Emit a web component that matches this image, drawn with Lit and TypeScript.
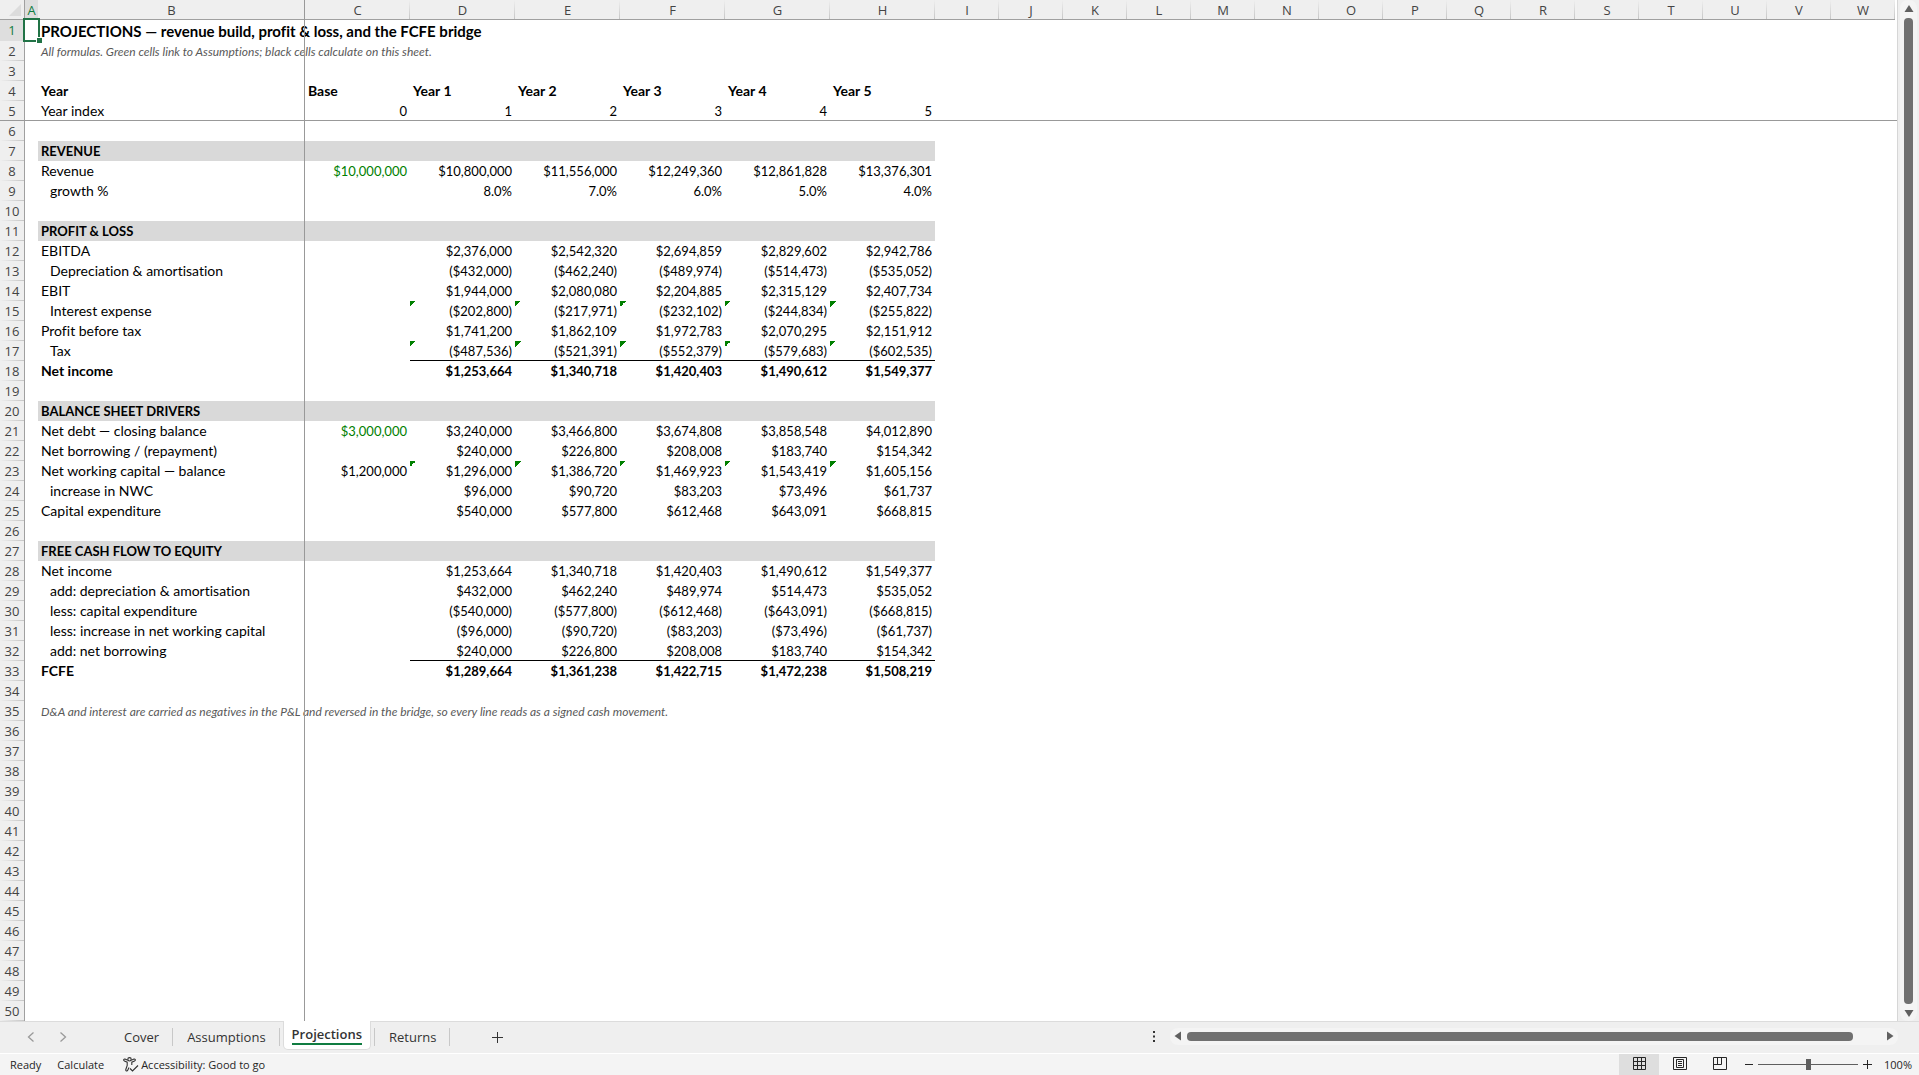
import { LitElement, html, css, svg } from "lit";
import { customElement, state } from "lit/decorators.js";
import { classMap } from "lit/directives/class-map.js";

type Kind = "title" | "note" | "years" | "index" | "section" | "line" | "total";

interface Row {
  kind: Kind;
  label: string;
  indent?: boolean;
  linked?: boolean;
  flagged?: boolean;
  ruled?: boolean;
  cells?: string[];
}

const COLUMNS = "ABCDEFGHIJKLMNOPQRSTUVW".split("");
const ROW_COUNT = 50;

const ROWS: Record<number, Row> = {
  1: { kind: "title", label: "PROJECTIONS — revenue build, profit & loss, and the FCFE bridge" },
  2: { kind: "note", label: "All formulas. Green cells link to Assumptions; black cells calculate on this sheet." },
  4: { kind: "years", label: "Year", cells: ["Base", "Year 1", "Year 2", "Year 3", "Year 4", "Year 5"] },
  5: { kind: "index", label: "Year index", cells: ["0", "1", "2", "3", "4", "5"] },
  7: { kind: "section", label: "REVENUE" },
  8: { kind: "line", label: "Revenue", linked: true, cells: ["$10,000,000", "$10,800,000", "$11,556,000", "$12,249,360", "$12,861,828", "$13,376,301"] },
  9: { kind: "line", label: "growth %", indent: true, cells: ["", "8.0%", "7.0%", "6.0%", "5.0%", "4.0%"] },
  11: { kind: "section", label: "PROFIT & LOSS" },
  12: { kind: "line", label: "EBITDA", cells: ["", "$2,376,000", "$2,542,320", "$2,694,859", "$2,829,602", "$2,942,786"] },
  13: { kind: "line", label: "Depreciation & amortisation", indent: true, cells: ["", "($432,000)", "($462,240)", "($489,974)", "($514,473)", "($535,052)"] },
  14: { kind: "line", label: "EBIT", cells: ["", "$1,944,000", "$2,080,080", "$2,204,885", "$2,315,129", "$2,407,734"] },
  15: { kind: "line", label: "Interest expense", indent: true, flagged: true, cells: ["", "($202,800)", "($217,971)", "($232,102)", "($244,834)", "($255,822)"] },
  16: { kind: "line", label: "Profit before tax", cells: ["", "$1,741,200", "$1,862,109", "$1,972,783", "$2,070,295", "$2,151,912"] },
  17: { kind: "line", label: "Tax", indent: true, flagged: true, ruled: true, cells: ["", "($487,536)", "($521,391)", "($552,379)", "($579,683)", "($602,535)"] },
  18: { kind: "total", label: "Net income", cells: ["", "$1,253,664", "$1,340,718", "$1,420,403", "$1,490,612", "$1,549,377"] },
  20: { kind: "section", label: "BALANCE SHEET DRIVERS" },
  21: { kind: "line", label: "Net debt — closing balance", linked: true, cells: ["$3,000,000", "$3,240,000", "$3,466,800", "$3,674,808", "$3,858,548", "$4,012,890"] },
  22: { kind: "line", label: "Net borrowing / (repayment)", cells: ["", "$240,000", "$226,800", "$208,008", "$183,740", "$154,342"] },
  23: { kind: "line", label: "Net working capital — balance", flagged: true, cells: ["$1,200,000", "$1,296,000", "$1,386,720", "$1,469,923", "$1,543,419", "$1,605,156"] },
  24: { kind: "line", label: "increase in NWC", indent: true, cells: ["", "$96,000", "$90,720", "$83,203", "$73,496", "$61,737"] },
  25: { kind: "line", label: "Capital expenditure", cells: ["", "$540,000", "$577,800", "$612,468", "$643,091", "$668,815"] },
  27: { kind: "section", label: "FREE CASH FLOW TO EQUITY" },
  28: { kind: "line", label: "Net income", cells: ["", "$1,253,664", "$1,340,718", "$1,420,403", "$1,490,612", "$1,549,377"] },
  29: { kind: "line", label: "add: depreciation & amortisation", indent: true, cells: ["", "$432,000", "$462,240", "$489,974", "$514,473", "$535,052"] },
  30: { kind: "line", label: "less: capital expenditure", indent: true, cells: ["", "($540,000)", "($577,800)", "($612,468)", "($643,091)", "($668,815)"] },
  31: { kind: "line", label: "less: increase in net working capital", indent: true, cells: ["", "($96,000)", "($90,720)", "($83,203)", "($73,496)", "($61,737)"] },
  32: { kind: "line", label: "add: net borrowing", indent: true, ruled: true, cells: ["", "$240,000", "$226,800", "$208,008", "$183,740", "$154,342"] },
  33: { kind: "total", label: "FCFE", cells: ["", "$1,289,664", "$1,361,238", "$1,422,715", "$1,472,238", "$1,508,219"] },
  35: { kind: "note", label: "D&A and interest are carried as negatives in the P&L and reversed in the bridge, so every line reads as a signed cash movement." },
};

@customElement("sheet-grid")
class SheetGrid extends LitElement {
  static styles = css`
    :host {
      display: block;
      overflow: hidden;
      background: #fff;
      border-right: 1px solid #d6d6d6;
      font-family: Lato, "Liberation Sans", sans-serif;
      font-size: 14px;
      font-variant-ligatures: none;
      color: #000;
    }
    .canvas {
      position: relative;
    }
    table {
      table-layout: fixed;
      width: 1895px;
      border-collapse: separate;
      border-spacing: 0;
    }
    .gutter { width: 25px; }
    .narrow { width: 13px; }
    .label { width: 267px; }
    .figure { width: 105px; }
    .plain { width: 64px; }
    th, td {
      box-sizing: border-box;
      height: 20px;
      padding: 0 3px;
      line-height: 20px;
      white-space: nowrap;
      font-weight: 400;
      text-align: left;
    }
    thead th {
      padding: 1px 0 0;
      line-height: 18px;
      text-align: center;
      font-family: "Open Sans", "Noto Sans", sans-serif;
      font-size: 13px;
      color: #444;
      border-bottom: 1px solid #a0a0a0;
      background: linear-gradient(#efefef, #c6c6c6) right / 1px 100% no-repeat #efefef;
    }
    thead .corner {
      padding: 4px 3px 3px 9px;
      background: #efefef;
      border-right: 1px solid #a0a0a0;
      line-height: 0;
    }
    tbody th {
      padding: 0;
      text-align: center;
      line-height: 19px;
      font-family: "Open Sans", "Noto Sans", sans-serif;
      font-size: 13px;
      color: #444;
      border-right: 1px solid #a0a0a0;
      background: linear-gradient(90deg, #efefef, #c6c6c6) bottom / 100% 1px no-repeat #efefef;
    }
    thead .current, tbody .current {
      color: #107c41;
      background: #dedede;
    }
    tr.first th, tr.first td { height: 21px; }
    .title td { font-size: 15px; font-weight: 700; }
    .note td { padding-top: 1px; line-height: 19px; font-size: 12px; font-style: italic; color: #595959; }
    .years td, .total td, .section td { font-weight: 700; }
    .section .band { background: #d9d9d9; font-size: 13px; }
    td.value { text-align: right; font-size: 13px; }
    td.indent { padding-left: 12px; }
    td.linked { color: #008000; }
    td.flagged {
      background: linear-gradient(135deg, #008000 50%, transparent 50%) 0 0 / 6px 6px no-repeat;
    }
    td.ruled { box-shadow: inset 0 -1px #000; }
    .freeze-x, .freeze-y { position: absolute; background: #999; }
    .freeze-x { left: 0; right: 0; top: 120px; height: 1px; }
    .freeze-y { top: 0; bottom: 0; left: 304px; width: 1px; }
    .cursor {
      position: absolute;
      box-sizing: border-box;
      left: 23px;
      top: 18px;
      width: 17px;
      height: 24px;
      border: 2px solid #217346;
    }
    .handle {
      position: absolute;
      right: -4px;
      bottom: -3px;
      width: 5px;
      height: 5px;
      background: #217346;
      border: solid #fff;
      border-width: 1px 0 0 1px;
    }
  `;

  private column(letter: string, i: number) {
    const size = i === 0 ? "narrow" : i === 1 ? "label" : i < 8 ? "figure" : "plain";
    return html`<th scope="col" class=${classMap({ [size]: true, current: letter === "A" })}>${letter}</th>`;
  }

  private row(n: number) {
    const row = ROWS[n];
    const head = html`<th scope="row" class=${classMap({ current: n === 1 })}>${n}</th>`;
    if (!row) return html`<tr>${head}<td colspan=${COLUMNS.length}></td></tr>`;
    const band = row.kind === "section";
    const values = row.cells ?? ["", "", "", "", "", ""];
    return html`<tr class="${row.kind} ${n === 1 ? "first" : ""}">
      ${head}
      <td></td>
      <td class=${classMap({ band, indent: !!row.indent })}>${row.label}</td>
      ${values.map((v, i) => html`<td class=${classMap({
        band,
        value: row.kind !== "years",
        linked: !!row.linked && i === 0,
        flagged: !!row.flagged && i > 0,
        ruled: !!row.ruled && i > 0,
      })}>${v}</td>`)}
    </tr>`;
  }

  render() {
    return html`<div class="canvas">
      <table aria-label="Projections">
        <thead>
          <tr>
            <th class="gutter corner"><svg width="12" height="12" viewBox="0 0 12 12" aria-hidden="true"><path d="M12 0V12H0Z" fill="#dcdcdc"/></svg></th>
            ${COLUMNS.map((c, i) => this.column(c, i))}
          </tr>
        </thead>
        <tbody>${Array.from({ length: ROW_COUNT }, (_, i) => this.row(i + 1))}</tbody>
      </table>
      <div class="freeze-x"></div>
      <div class="freeze-y"></div>
      <div class="cursor"><div class="handle"></div></div>
    </div>`;
  }
}

@customElement("sheet-tabs")
class SheetTabs extends LitElement {
  @state() private active = "Projections";

  static styles = css`
    :host {
      display: flex;
      box-sizing: border-box;
      height: 32px;
      background: #efefef;
      font-family: "Open Sans", "Noto Sans", sans-serif;
      font-size: 13px;
      color: #333;
    }
    button {
      border: 0;
      padding: 0;
      background: none;
      font: inherit;
      color: inherit;
      line-height: 0;
    }
    .left {
      display: flex;
      flex: 1;
      border-top: 1px solid #dcdcdc;
    }
    .nav { display: flex; align-items: center; padding: 0 31px 2px 15px; }
    .nav button { width: 32px; height: 28px; }
    .tab {
      display: flex;
      align-items: center;
      height: 18px;
      margin-top: 6px;
      padding: 0 13px 0 14px;
      line-height: 18px;
      border-right: 1px solid #c8c8c8;
    }
    .tab.active {
      box-sizing: border-box;
      height: 29px;
      margin: -1px 3px 0;
      padding: 0 8px;
      background: #fff;
      border: solid #dcdcdc;
      border-width: 0 1px 1px;
      border-radius: 0 0 5px 5px;
      font-weight: 600;
    }
    .tab.active span {
      line-height: 18px;
      border-bottom: 2px solid #107c41;
    }
    .tab.after { border-left: 1px solid #c8c8c8; }
    .add { width: 40px; margin-left: 27px; height: 30px; }
    .right {
      display: flex;
      flex: 0 1 767px;
      box-sizing: border-box;
      align-items: center;
      padding: 0 21px 8px 0;
      border-top: 1px solid #dcdcdc;
    }
    .more { width: 4px; margin-right: 14px; padding-top: 6px; }
    .track {
      display: flex;
      flex: 1;
      align-items: center;
      height: 17px;
      margin-top: 5px;
      padding: 0 4px;
      border-radius: 8px;
      background: #f4f4f4;
    }
    .lane { flex: 1; margin: 0 33px 0 5px; height: 9px; border-radius: 4px; background: #707070; }
  `;

  private names = ["Cover", "Assumptions", "Projections", "Returns"];

  render() {
    const at = this.names.indexOf(this.active);
    return html`
      <div class="left">
        <div class="nav">
          <button aria-label="Previous sheet"><svg width="8" height="12" viewBox="0 0 8 12"><path d="M6.500 1.500L1.500 6L6.500 10.500" fill="none" stroke="#9a9a9a" stroke-width="1.300"/></svg></button>
          <button aria-label="Next sheet"><svg width="8" height="12" viewBox="0 0 8 12"><path d="M1.500 1.500L6.500 6L1.500 10.500" fill="none" stroke="#9a9a9a" stroke-width="1.300"/></svg></button>
        </div>
        ${this.names.map((name, i) => html`<button
          class=${classMap({ tab: true, active: i === at, after: i === at + 1 })}
          aria-pressed=${i === at}
          @click=${() => (this.active = name)}
        ><span>${name}</span></button>`)}
        <button class="add" aria-label="New sheet"><svg width="11" height="11" viewBox="0 0 11 11"><path d="M5.500 0V11M0 5.500H11" stroke="#333"/></svg></button>
      </div>
      <div class="right">
        <button class="more" aria-label="Resize scroll bar"><svg width="2" height="11" viewBox="0 0 2 11"><path d="M0 0H2V2H0ZM0 4.500H2V6.500H0ZM0 9H2V11H0Z" fill="#333"/></svg></button>
        <div class="track">
          <button aria-label="Scroll left"><svg width="8" height="10" viewBox="0 0 8 10"><path d="M7 0.500V9.500L0.500 5Z" fill="#606060"/></svg></button>
          <div class="lane"></div>
          <button aria-label="Scroll right"><svg width="8" height="10" viewBox="0 0 8 10"><path d="M1 0.500V9.500L7.500 5Z" fill="#606060"/></svg></button>
        </div>
      </div>`;
  }
}

@customElement("status-bar")
class StatusBar extends LitElement {
  static styles = css`
    :host {
      display: flex;
      align-items: center;
      box-sizing: border-box;
      height: 22px;
      border-top: 1px solid #fff;
      padding: 0 8px 0 10px;
      background: #f4f4f4;
      font-family: "Open Sans", "Noto Sans", sans-serif;
      font-size: 11px;
      color: #262626;
    }
    button {
      display: flex;
      align-items: center;
      justify-content: center;
      height: 21px;
      border: 0;
      padding: 0;
      background: none;
      font: inherit;
      color: inherit;
    }
    .state { margin-right: 16px; }
    .access { gap: 2px; margin-left: 3px; }
    .views { display: flex; margin-left: auto; margin-right: 1px; }
    .views button { width: 40px; }
    .views svg { margin-bottom: 1px; }
    .views .on { background: #dedede; }
    .step { width: 17px; }
    input {
      appearance: none;
      width: 100px;
      height: 12px;
      margin: 0 1px;
      background: linear-gradient(#5f5f5f, #5f5f5f) center / 100% 1px no-repeat;
    }
    input::-webkit-slider-thumb {
      appearance: none;
      width: 5px;
      height: 11px;
      background: #5f5f5f;
    }
    .zoom { margin-left: 9px; width: 26px; }
  `;

  private icon(d: string) {
    return html`<svg width="15" height="14" viewBox="0 0 15 14" aria-hidden="true">${svg`<path d=${d} fill="none" stroke="#262626"/>`}</svg>`;
  }

  render() {
    return html`
      <span class="state">Ready</span>
      <span class="state">Calculate</span>
      <button class="access">
        <svg width="16" height="15" viewBox="0 0 16 15" fill="none" stroke="#333" stroke-width="1.100" aria-hidden="true">
          <circle cx="6.500" cy="2.300" r="1.700"/>
          <path d="M4.800 3.300L2 2.100C0.500 1.700 0.200 3.500 1.400 4L4.200 5.200V8.500L2.800 12.500C2.500 14.200 4.200 14.400 4.700 13.300L6 10.500M8.200 3.300L11 2.100C12.500 1.700 12.800 3.500 11.600 4L8.800 5.200V8"/>
          <path d="M7 11.500L9.500 14L15 8.500"/>
        </svg>
        Accessibility: Good to go
      </button>
      <div class="views">
        <button class="on" aria-label="Normal view">${this.icon("M1.500 0.500H13.500V12.500H1.500ZM5.500 0.500V12.500M9.500 0.500V12.500M1.500 4.500H13.500M1.500 8.500H13.500")}</button>
        <button aria-label="Page layout view">${this.icon("M1.500 0.500H14.500V12.500H1.500ZM4.500 2.500H11.500V10.500H4.500ZM6 4.500H10M6 6.500H10M6 8.500H10")}</button>
        <button aria-label="Page break preview">${this.icon("M1.500 0.500H14.500V12.500H1.500ZM1.500 7.500H9.500V0.500M5.500 0.500V7.500")}</button>
      </div>
      <button class="step" aria-label="Zoom out"><svg width="8" height="9" viewBox="0 0 8 9"><path d="M0 4.500H8" stroke="#262626"/></svg></button>
      <input type="range" min="0" max="200" value="100" aria-label="Zoom">
      <button class="step" aria-label="Zoom in"><svg width="9" height="9" viewBox="0 0 9 9"><path d="M0 4.500H9M4.500 0V9" stroke="#262626"/></svg></button>
      <button class="zoom">100%</button>`;
  }
}

@customElement("app-root")
class AppRoot extends LitElement {
  static styles = css`
    :host {
      display: flex;
      flex-direction: column;
      height: 100vh;
      overflow: hidden;
      background: #efefef;
    }
    .work { display: flex; flex: 1; min-height: 0; }
    sheet-grid { flex: 1; min-width: 0; }
    .rail {
      display: flex;
      flex-direction: column;
      align-items: center;
      gap: 6px;
      width: 17px;
      margin: 0 2px;
      padding: 5px 0 4px;
      box-sizing: border-box;
      border-radius: 8px;
      background: #f4f4f4;
    }
    .rail button { border: 0; padding: 0; background: none; line-height: 0; }
    .thumb { flex: 1; width: 9px; border-radius: 4px; background: #707070; }
  `;

  render() {
    return html`
      <div class="work">
        <sheet-grid></sheet-grid>
        <div class="rail">
          <button aria-label="Scroll up"><svg width="10" height="7" viewBox="0 0 10 7"><path d="M5 0L9.500 7H0.500Z" fill="#606060"/></svg></button>
          <div class="thumb"></div>
          <button aria-label="Scroll down"><svg width="10" height="7" viewBox="0 0 10 7"><path d="M5 7L9.500 0H0.500Z" fill="#606060"/></svg></button>
        </div>
      </div>
      <sheet-tabs></sheet-tabs>
      <status-bar></status-bar>`;
  }
}
